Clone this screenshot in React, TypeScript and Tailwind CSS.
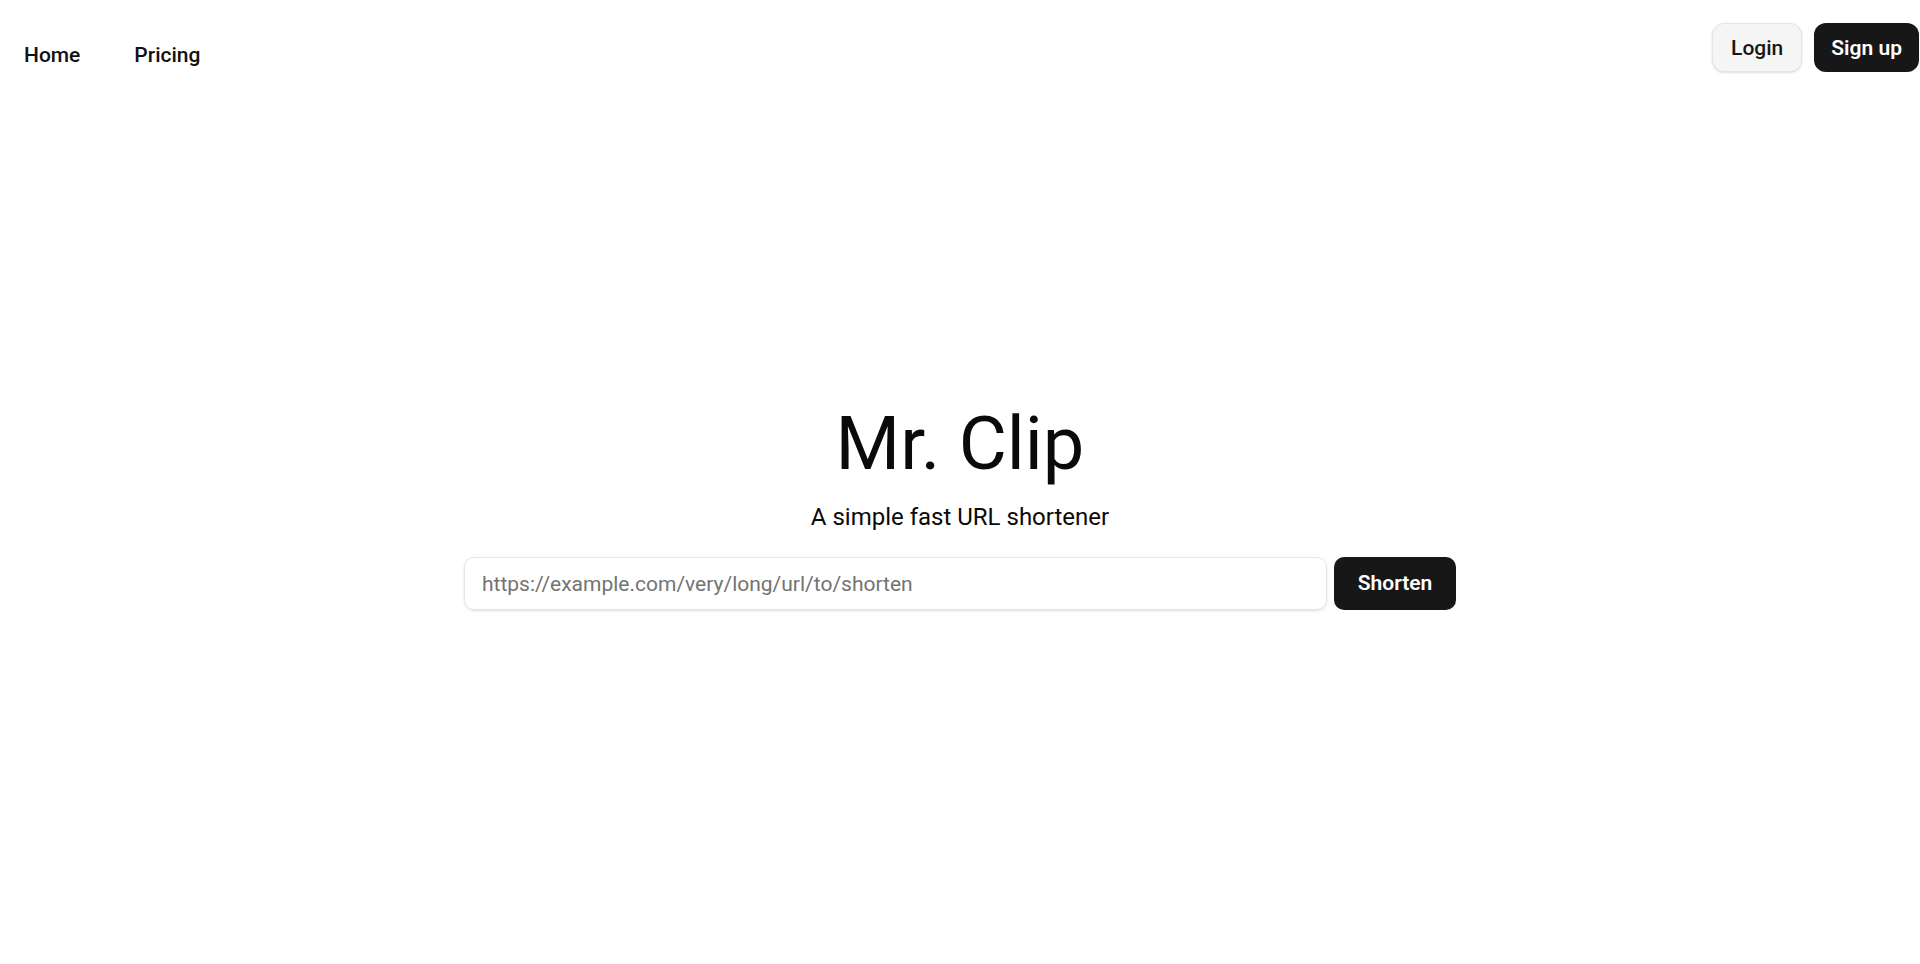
import { useState } from 'react'
import type { FormEvent } from 'react'

function NavLink({ children }: { children: string }) {
  return (
    <a href="#" className="text-[21px] font-medium text-[#111111] hover:text-gray-600 transition">
      {children}
    </a>
  )
}

export default function App() {
  const [url, setUrl] = useState('')

  function handleSubmit(event: FormEvent) {
    event.preventDefault()
  }

  return (
    <div className="min-h-screen bg-white text-[#0a0a0a] font-['Roboto',sans-serif]">
      <header className="flex items-start justify-between pl-6 pr-px pt-[23px]">
        <nav className="flex items-center gap-[54px] pt-[17px]">
          <NavLink>Home</NavLink>
          <NavLink>Pricing</NavLink>
        </nav>
        <div className="flex items-center gap-3">
          <button
            type="button"
            className="h-[49px] pt-[3px] px-[18px] rounded-xl bg-[#f5f5f5] border border-[#e5e5e5] shadow-sm text-[21px] font-medium text-[#171717]"
          >
            Login
          </button>
          <button
            type="button"
            className="h-[49px] pt-[3px] px-[17px] rounded-xl bg-[#171717] text-[21px] font-semibold text-white"
          >
            Sign up
          </button>
        </div>
      </header>

      <main className="flex flex-col items-center pt-[335px]">
        <h1 className="text-[74px] font-normal leading-none text-[#0a0a0a]">Mr. Clip</h1>
        <p className="mt-[20px] text-2xl text-[#0a0a0a]">A simple fast URL shortener</p>
        <form onSubmit={handleSubmit} className="mt-[24px] flex w-[992px] gap-[7px]">
          <input
            value={url}
            onChange={(e) => setUrl(e.target.value)}
            placeholder="https://example.com/very/long/url/to/shorten"
            className="flex-1 h-[53px] rounded-[10px] border border-[#e5e5e5] shadow-sm px-[17px] text-[21px] text-[#0a0a0a] placeholder-[#737373] focus:outline-none"
          />
          <button
            type="submit"
            className="w-[122px] h-[53px] rounded-[10px] bg-[#171717] text-[21px] font-semibold text-white"
          >
            Shorten
          </button>
        </form>
      </main>
    </div>
  )
}
